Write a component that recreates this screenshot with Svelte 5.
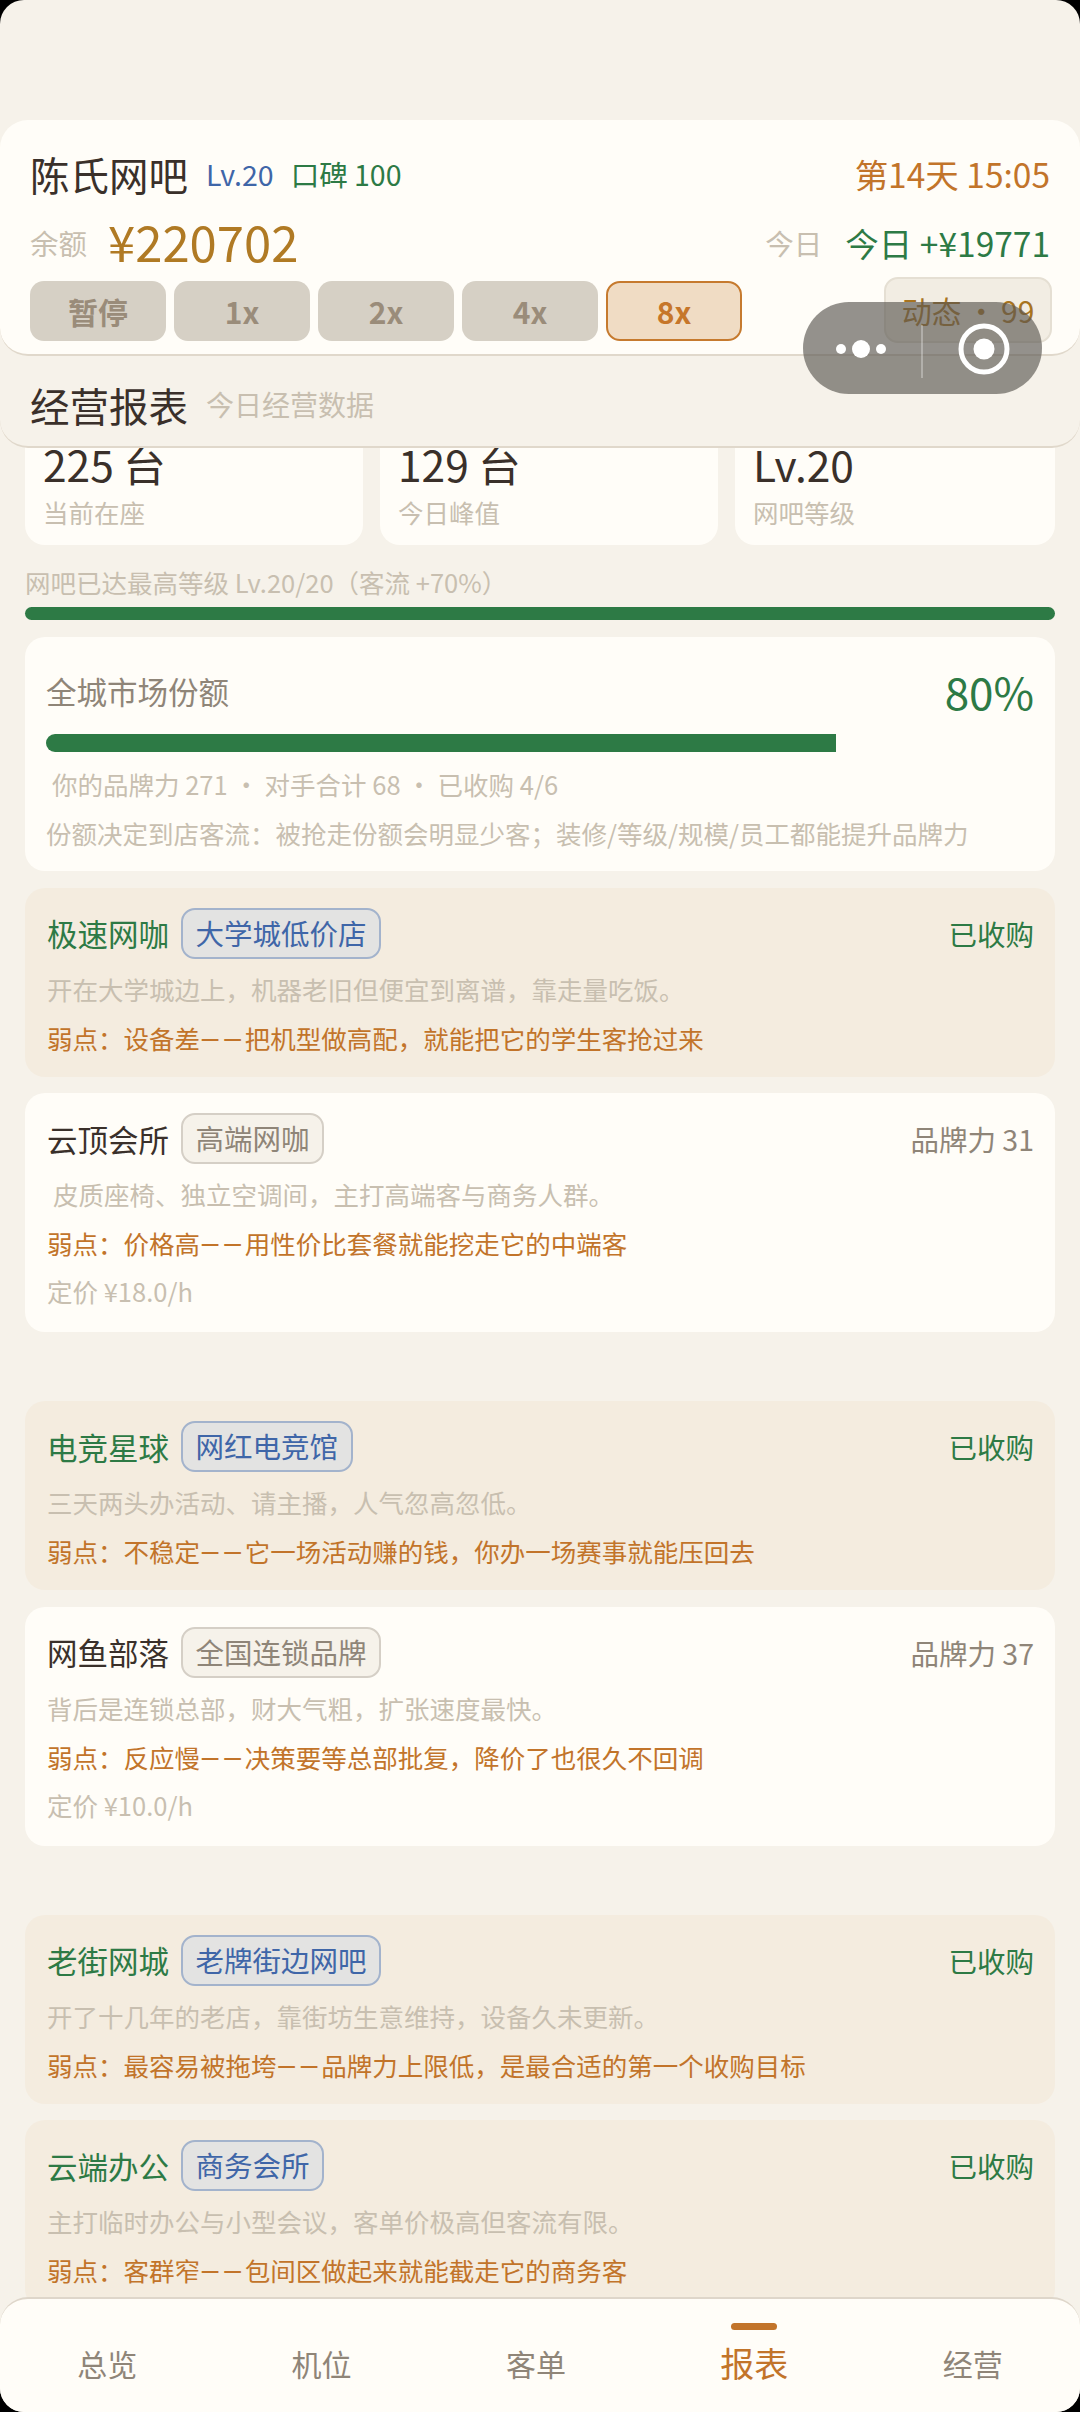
<script>
  const speeds = [
    { label: '暂停' },
    { label: '1x' },
    { label: '2x' },
    { label: '4x' },
    { label: '8x', active: true }
  ];

  const stats = [
    { value: '225 台', label: '当前在座' },
    { value: '129 台', label: '今日峰值' },
    { value: 'Lv.20', label: '网吧等级' }
  ];

  const rivals = [
    { name: '极速网咖', tag: '大学城低价店', owned: true, desc: '开在大学城边上，机器老旧但便宜到离谱，靠走量吃饭。', flaw: '设备差', fix: '把机型做高配，就能把它的学生客抢过来' },
    { name: '云顶会所', tag: '高端网咖', power: 31, price: '18.0', indent: true, desc: '皮质座椅、独立空调间，主打高端客与商务人群。', flaw: '价格高', fix: '用性价比套餐就能挖走它的中端客' },
    { name: '电竞星球', tag: '网红电竞馆', owned: true, gap: true, desc: '三天两头办活动、请主播，人气忽高忽低。', flaw: '不稳定', fix: '它一场活动赚的钱，你办一场赛事就能压回去' },
    { name: '网鱼部落', tag: '全国连锁品牌', power: 37, price: '10.0', desc: '背后是连锁总部，财大气粗，扩张速度最快。', flaw: '反应慢', fix: '决策要等总部批复，降价了也很久不回调' },
    { name: '老街网城', tag: '老牌街边网吧', owned: true, gap: true, desc: '开了十几年的老店，靠街坊生意维持，设备久未更新。', flaw: '最容易被拖垮', fix: '品牌力上限低，是最合适的第一个收购目标' },
    { name: '云端办公', tag: '商务会所', owned: true, desc: '主打临时办公与小型会议，客单价极高但客流有限。', flaw: '客群窄', fix: '包间区做起来就能截走它的商务客' }
  ];

  const tabs = ['总览', '机位', '客单', '报表', '经营'];
  const activeTab = '报表';
</script>

<div class="screen">
  <header class="top">
    <div class="title-row">
      <div class="shop">
        <span class="shop-name">陈氏网吧</span>
        <span class="level">Lv.20</span>
        <span class="rep">口碑 100</span>
      </div>
      <span class="clock">第14天 15:05</span>
    </div>
    <div class="money-row">
      <div class="money">
        <span class="money-label">余额</span>
        <span class="balance">¥220702</span>
      </div>
      <div class="money">
        <span class="money-label">今日</span>
        <span class="income">今日 +¥19771</span>
      </div>
    </div>
    <div class="control-row">
      <div class="speeds">
        {#each speeds as s}
          <button class="speed" class:active={s.active}>{s.label}</button>
        {/each}
      </div>
      <div class="feed">动态 · 99</div>
    </div>
  </header>

  <div class="page-head">
    <span class="page-title">经营报表</span>
    <span class="page-sub">今日经营数据</span>
  </div>

  <main class="content">
    <div class="stats">
      {#each stats as s}
        <div class="stat">
          <div class="stat-value">{s.value}</div>
          <div class="stat-label">{s.label}</div>
        </div>
      {/each}
    </div>

    <div class="level-text">网吧已达最高等级 Lv.20/20（客流 +70%）</div>
    <div class="level-bar"></div>

    <section class="market">
      <div class="market-head">
        <span class="market-title">全城市场份额</span>
        <span class="market-value">80%</span>
      </div>
      <div class="market-track"><div class="market-fill" style="width: 80%"></div></div>
      <div class="note indent">你的品牌力 271 · 对手合计 68 · 已收购 4/6</div>
      <div class="note note-last">份额决定到店客流：被抢走份额会明显少客；装修/等级/规模/员工都能提升品牌力</div>
    </section>

    {#each rivals as r}
      <article class="rival" class:owned={r.owned} class:gap={r.gap}>
        <div class="rival-head">
          <span class="rival-name">{r.name}</span>
          <span class="tag">{r.tag}</span>
          {#if r.owned}
            <span class="rival-state">已收购</span>
          {:else}
            <span class="rival-power">品牌力 {r.power}</span>
          {/if}
        </div>
        <div class="desc" class:indent={r.indent}>{r.desc}</div>
        <div class="weak">弱点：{r.flaw}<span class="dash">——</span>{r.fix}</div>
        {#if r.price}
          <div class="price">定价 ¥{r.price}/h</div>
        {/if}
      </article>
    {/each}
  </main>

  <nav class="tabbar">
    {#each tabs as t}
      <div class="tab" class:current={t === activeTab}>{t}</div>
    {/each}
  </nav>

  <div class="capsule">
    <svg width="239" height="92" viewBox="0 0 239 92" fill="none">
      <circle cx="38" cy="47" r="5" fill="#fff" />
      <circle cx="58" cy="47" r="9" fill="#fff" />
      <circle cx="78" cy="47" r="5" fill="#fff" />
      <rect x="118" y="23" width="2" height="53" fill="#fff" opacity="0.3" />
      <circle cx="181" cy="47" r="23" stroke="#fff" stroke-width="5" />
      <circle cx="181" cy="47" r="10.5" fill="#fff" />
    </svg>
  </div>
</div>

<style>
  :global(body) {
    background: #000;
  }

  .screen {
    position: relative;
    width: 1080px;
    height: 2412px;
    padding-top: 120px;
    box-sizing: border-box;
    overflow: hidden;
    border-radius: 24px;
    background: #f6f2ea;
    color: #3a302a;
    font-family: "Noto Sans CJK SC", "Noto Sans", sans-serif;
  }

  .top {
    position: relative;
    z-index: 3;
    height: 236px;
    box-sizing: border-box;
    padding: 26px 30px 0;
    background: #fffdf8;
    border-bottom: 2px solid #e0d8cb;
    border-radius: 28px;
  }

  .title-row,
  .money-row,
  .control-row {
    display: flex;
    justify-content: space-between;
    align-items: center;
  }

  .title-row {
    height: 54px;
  }

  .shop,
  .money {
    display: flex;
    align-items: center;
  }

  .shop-name {
    font-size: 39.5px;
    color: #3a302a;
  }

  .level {
    margin-left: 18px;
    font-size: 28.5px;
    color: #3f66a8;
  }

  .rep {
    margin-left: 17px;
    font-size: 28.5px;
    color: #2d7a45;
  }

  .clock {
    font-size: 33.5px;
    color: #c2742a;
  }

  .money-row {
    height: 60px;
    margin-top: 12px;
  }

  .money-label {
    font-size: 28.5px;
    color: #c8bfb0;
  }

  .balance {
    margin-left: 21px;
    font-size: 49px;
    line-height: 56px;
    margin-top: -3px;
    color: #b07a24;
  }

  .income {
    margin-left: 23px;
    font-size: 33.5px;
    color: #2d7a45;
  }

  .control-row {
    height: 66px;
    margin-top: 5px;
  }

  .speeds {
    display: flex;
    gap: 8px;
    padding-top: 2px;
  }

  .speed {
    width: 136px;
    height: 60px;
    padding: 0;
    box-sizing: border-box;
    border: none;
    border-radius: 14px;
    background: #d6d0c5;
    color: #9a8c7a;
    font: 700 30px "Noto Sans CJK SC", sans-serif;
  }

  .speed.active {
    border: 2px solid #c67a2e;
    background: #f0dcc4;
    color: #c6762a;
  }

  .feed {
    width: 168px;
    height: 66px;
    margin-right: -2px;
    box-sizing: border-box;
    border: 2px solid #e5dfd3;
    border-radius: 14px;
    background: #f2ede3;
    color: #a8741f;
    font-size: 30px;
    line-height: 62px;
    word-spacing: -2px;
    text-align: center;
  }

  .page-head {
    position: relative;
    z-index: 2;
    height: 92px;
    box-sizing: border-box;
    display: flex;
    align-items: center;
    padding: 6px 30px 0;
    background: #f6f2ea;
    border-bottom: 2px solid #e0d8cb;
    border-radius: 28px;
  }

  .page-title {
    font-size: 39.5px;
    color: #3a302a;
  }

  .page-sub {
    margin-left: 18px;
    font-size: 28px;
    color: #c8bfb0;
  }

  .content {
    padding: 0 25px;
  }

  .stats {
    display: grid;
    grid-template-columns: 338px 338px 1fr;
    gap: 17px;
    margin-top: -23px;
  }

  .stat {
    padding: 13px 18px 14px;
    background: #fffdf8;
    border-radius: 20px;
  }

  .stat-value {
    height: 52px;
    font-size: 42.5px;
    line-height: 52px;
    color: #3a302a;
  }

  .stat-label {
    height: 36px;
    margin-top: 5px;
    font-size: 25.5px;
    line-height: 34px;
    color: #c8bfb0;
  }

  .level-text {
    height: 36px;
    margin-top: 20px;
    font-size: 25.5px;
    line-height: 34px;
    color: #c8bfb0;
  }

  .level-bar {
    height: 13px;
    margin-top: 6px;
    border-radius: 7px;
    background: #2d7a45;
  }

  .market {
    margin-top: 17px;
    padding: 24px 21px 19px;
    background: #fffdf8;
    border-radius: 20px;
  }

  .market-head {
    display: flex;
    justify-content: space-between;
    align-items: center;
    height: 60px;
  }

  .market-title {
    font-size: 30.5px;
    color: #8f8578;
  }

  .market-value {
    font-size: 44px;
    color: #2d7a45;
  }

  .market-track {
    height: 18px;
    margin-top: 13px;
  }

  .market-fill {
    height: 100%;
    border-radius: 9px 0 0 9px;
    background: #2d7a45;
  }

  .note {
    height: 36px;
    margin-top: 14px;
    font-size: 25.5px;
    line-height: 36px;
    color: #c8bfb0;
  }

  .note-last {
    margin-top: 13px;
    padding-bottom: 1px;
    white-space: nowrap;
  }

  .indent {
    padding-left: 6px;
  }

  .rival {
    margin-top: 16.5px;
    padding: 20px 21px 20px 22px;
    background: #fffdf8;
    border-radius: 20px;
  }

  .rival.owned {
    background: #f4ecdf;
  }

  .rival.gap {
    margin-top: 69px;
  }

  .rival-head {
    display: flex;
    align-items: center;
    height: 51px;
  }

  .rival-name {
    font-size: 30.5px;
    color: #3a302a;
  }

  .owned .rival-name {
    color: #2d7a45;
  }

  .tag {
    margin-left: 12px;
    height: 51px;
    box-sizing: border-box;
    padding: 0 12.5px;
    border: 2px solid #d5cfc6;
    border-radius: 14px;
    background: #f6f2ea;
    color: #8f8578;
    font-size: 28.5px;
    line-height: 46px;
  }

  .owned .tag {
    border-color: #a3b3cc;
    background: #e3e3e2;
    color: #3f66a8;
  }

  .rival-state,
  .rival-power {
    margin-left: auto;
    font-size: 28.5px;
    color: #2d7a45;
  }

  .rival-power {
    color: #8f8578;
  }

  .desc,
  .weak,
  .price {
    height: 36px;
    font-size: 25.5px;
    line-height: 35px;
    white-space: nowrap;
  }

  .desc {
    margin-top: 12px;
    color: #c8bfb0;
  }

  .weak {
    margin-top: 14px;
    line-height: 34px;
    color: #c2742a;
  }

  .price {
    margin-top: 11px;
    margin-bottom: 3px;
    color: #c8bfb0;
  }

  .dash {
    font-family: Roboto, sans-serif;
    letter-spacing: 2.5px;
  }

  .tabbar {
    position: absolute;
    z-index: 4;
    left: 0;
    right: 0;
    bottom: 0;
    height: 115px;
    box-sizing: border-box;
    display: flex;
    justify-content: space-around;
    align-items: flex-start;
    padding-top: 44px;
    background: #fffdf8;
    border-top: 2px solid #ded6ca;
    border-radius: 28px 28px 0 0;
  }

  .tab {
    position: relative;
    height: 40px;
    font-size: 30px;
    line-height: 40px;
    color: #8f8578;
  }

  .tab.current {
    font-size: 34px;
    color: #c2742a;
  }

  .tab.current::before {
    content: "";
    position: absolute;
    top: -20px;
    left: 50%;
    width: 46px;
    height: 7px;
    margin-left: -23px;
    border-radius: 4px;
    background: #c2742a;
  }

  .capsule {
    position: absolute;
    z-index: 5;
    top: 302px;
    left: 803px;
    width: 239px;
    height: 92px;
    border-radius: 46px;
    background: rgba(90, 88, 82, 0.65);
  }

  .capsule svg {
    display: block;
  }
</style>
